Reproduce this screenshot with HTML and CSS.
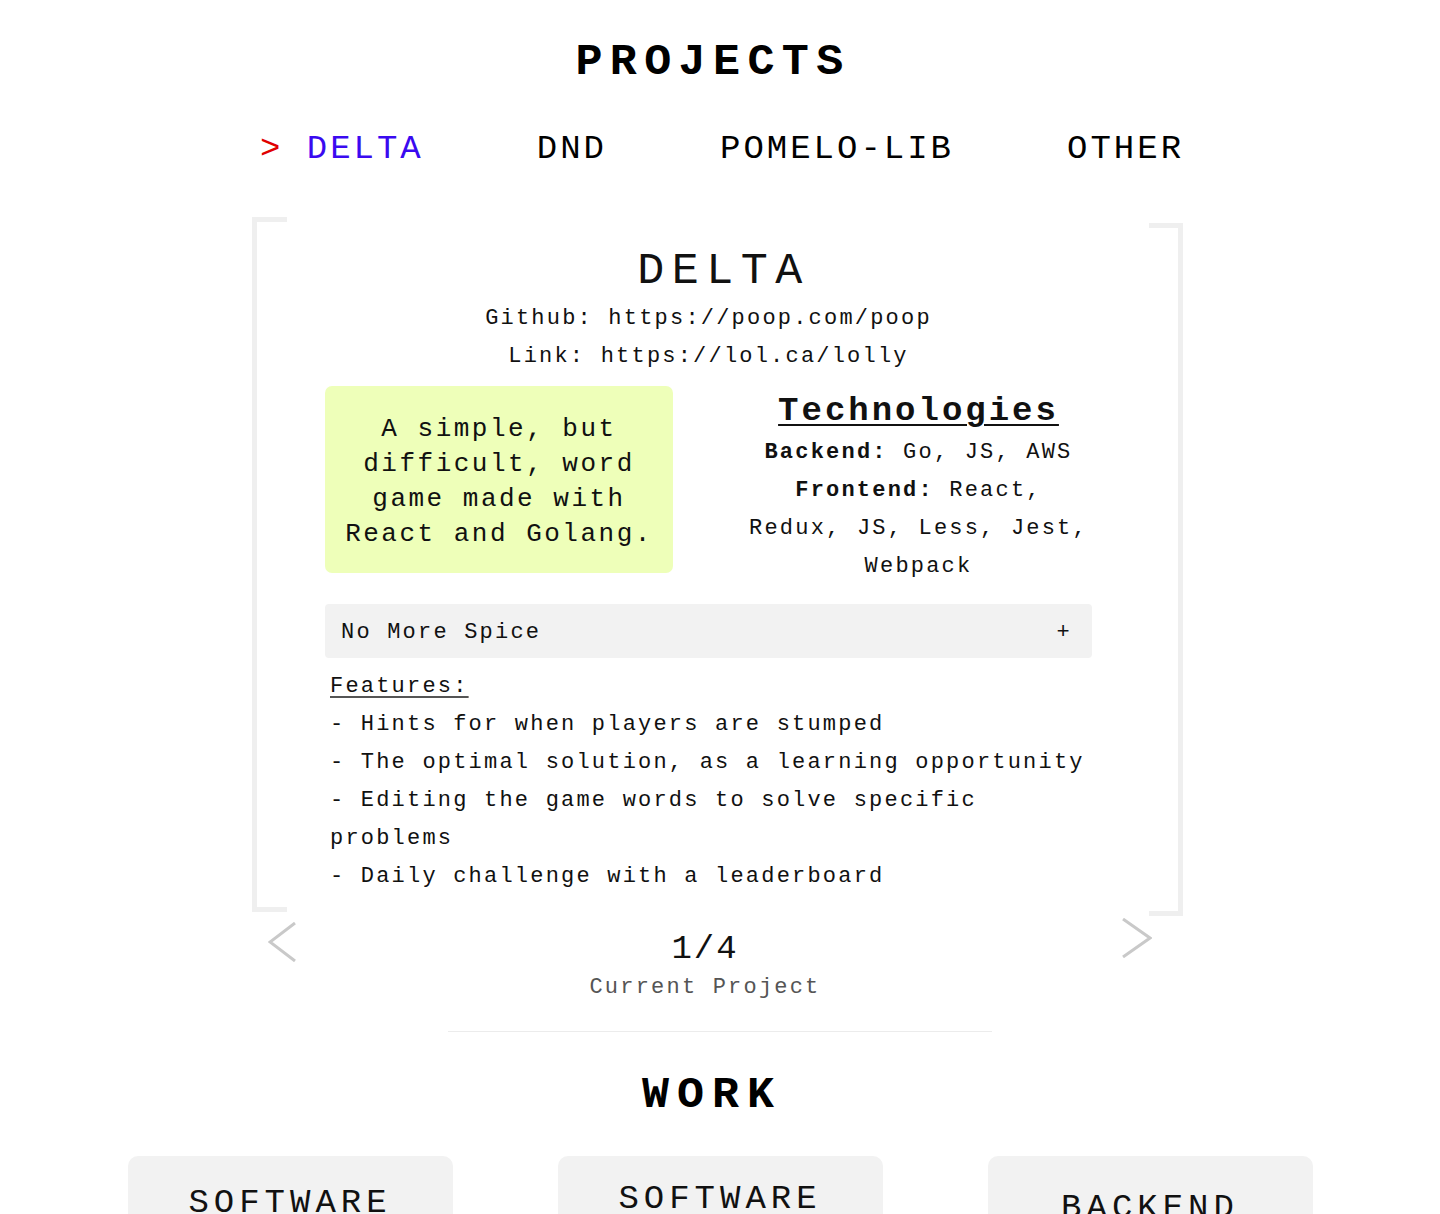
FILE: index.html
```html
<!DOCTYPE html>
<html lang="en">
<head>
<meta charset="utf-8">
<title>Projects</title>
<link rel="stylesheet" href="styles.css">
</head>
<body>
<main class="page">
  <h1 class="section-title">PROJECTS</h1>
  <nav class="tabs">
    <span class="tab tab-active"><span class="tab-caret">&gt;</span> DELTA</span>
    <span class="tab">DND</span>
    <span class="tab">POMELO-LIB</span>
    <span class="tab">OTHER</span>
  </nav>

  <section class="card">
    <h2 class="project-title">DELTA</h2>
    <p class="project-link">Github: https://poop.com/poop</p>
    <p class="project-link">Link: https://lol.ca/lolly</p>
    <div class="project-row">
      <div class="summary">A simple, but difficult, word game made with React and Golang.</div>
      <div class="tech">
        <h3 class="tech-title">Technologies</h3>
        <p class="tech-line"><b>Backend:</b> Go, JS, AWS</p>
        <p class="tech-line"><b>Frontend:</b> React, Redux, JS, Less, Jest, Webpack</p>
      </div>
    </div>
    <div class="accordion">
      <span class="accordion-label">No More Spice</span>
      <span class="accordion-icon">+</span>
    </div>
    <div class="features">
      <div class="features-title">Features:</div>
      <div class="feature">- Hints for when players are stumped</div>
      <div class="feature">- The optimal solution, as a learning opportunity</div>
      <div class="feature">- Editing the game words to solve specific problems</div>
      <div class="feature">- Daily challenge with a leaderboard</div>
    </div>
  </section>

  <div class="controls">
    <svg class="arrow arrow-prev" width="28" height="40" viewBox="0 0 28 40"><polyline points="27,1 2,20 27,39" fill="none" stroke="#c9c9c9" stroke-width="3"/></svg>
    <div class="counter">
      <div class="counter-value">1/4</div>
      <div class="counter-label">Current Project</div>
    </div>
    <svg class="arrow arrow-next" width="30" height="40" viewBox="0 0 30 40"><polyline points="1,1 28,20 1,39" fill="none" stroke="#c9c9c9" stroke-width="3"/></svg>
  </div>

  <hr class="divider">

  <h1 class="section-title section-title-work">WORK</h1>
  <div class="work-grid">
    <div class="work-card"><div class="work-title work-title-a">SOFTWARE</div></div>
    <div class="work-card"><div class="work-title work-title-b">SOFTWARE</div></div>
    <div class="work-card"><div class="work-title work-title-c">BACKEND</div></div>
  </div>
</main>
</body>
</html>
```

FILE: styles.css
```css
*, *::before, *::after { box-sizing: border-box; }

html, body {
  margin: 0;
  padding: 0;
  background: #ffffff;
}

body {
  font-family: "Liberation Mono", "DejaVu Sans Mono", monospace;
  color: #111111;
  overflow: hidden;
}

.page {
  width: 1440px;
  padding-top: 37px;
}

.section-title {
  margin: 0;
  font-size: 45px;
  line-height: 52px;
  font-weight: 700;
  letter-spacing: 7.4px;
  text-align: center;
  padding-right: 14px;
  color: #000;
}

.tabs {
  display: flex;
  justify-content: center;
  gap: 113px;
  margin-top: 40px;
  font-size: 34px;
  line-height: 40px;
  letter-spacing: 3px;
  padding-left: 4px;
}

.tab { color: #000; }
.tab-active { color: #3a0af0; }
.tab-caret { color: #e00000; }

.card {
  position: relative;
  width: 931px;
  margin: 48px 0 0 252px;
  padding: 27px 91px 16px 73px;
}

.card::before,
.card::after {
  content: "";
  position: absolute;
  border: 5px solid #efefef;
}

.card::before {
  left: 0;
  top: 0;
  width: 35px;
  height: 695px;
  border-right: none;
}

.card::after {
  right: 0;
  top: 6px;
  width: 34px;
  height: 693px;
  border-left: none;
}

.project-title {
  margin: 0;
  font-size: 45px;
  line-height: 56px;
  font-weight: 400;
  letter-spacing: 7.5px;
  text-align: center;
  padding-left: 30px;
}

.project-link {
  margin: 0;
  font-size: 22px;
  line-height: 38px;
  letter-spacing: 2.2px;
  text-align: center;
}

.project-row {
  display: grid;
  grid-template-columns: 348px 347px;
  column-gap: 72px;
  margin-top: 10px;
  align-items: start;
}

.summary {
  background: #eeffb9;
  border-radius: 7px;
  padding: 26px 18px 21px;
  font-size: 26px;
  line-height: 35px;
  letter-spacing: 2.5px;
  text-align: center;
}

.tech {
  text-align: center;
  padding-top: 2px;
}

.tech-title {
  margin: 0;
  font-size: 34px;
  line-height: 46px;
  font-weight: 700;
  letter-spacing: 3px;
  text-decoration: underline;
  text-decoration-thickness: 2px;
  text-underline-offset: 4px;
}

.tech-line {
  margin: 0;
  font-size: 22px;
  line-height: 38px;
  letter-spacing: 2.2px;
}

.accordion {
  display: flex;
  justify-content: space-between;
  align-items: center;
  height: 54px;
  margin-top: 18px;
  padding: 2px 20px 0 16px;
  background: #f2f2f2;
  border-radius: 4px;
  font-size: 22px;
  letter-spacing: 2.2px;
}

.features {
  margin-top: 10px;
  padding-left: 5px;
  font-size: 22px;
  line-height: 38px;
  letter-spacing: 2.2px;
}

.features-title {
  text-decoration: underline;
  text-decoration-color: #555;
  text-underline-offset: 4px;
}

.controls {
  display: flex;
  justify-content: space-between;
  align-items: flex-start;
  width: 931px;
  margin-left: 252px;
  padding: 0 31px 0 16px;
}

.arrow { display: block; }
.arrow-prev { margin-top: 10px; }
.arrow-next { margin-top: 6px; }

.counter {
  padding-top: 17px;
  padding-right: 8px;
  text-align: center;
}

.counter-value {
  font-size: 34px;
  line-height: 40px;
  letter-spacing: 2px;
  color: #111;
}

.counter-label {
  margin-top: 3px;
  font-size: 22px;
  line-height: 32px;
  letter-spacing: 2.2px;
  color: #555;
}

.divider {
  width: 544px;
  margin: 27px auto 0;
  border: none;
  border-top: 1px solid #ececec;
  height: 0;
}

.section-title-work {
  margin-top: 38px;
  letter-spacing: 8px;
  padding-right: 16px;
}

.work-grid {
  display: grid;
  grid-template-columns: repeat(3, 325px);
  column-gap: 105px;
  justify-content: center;
  margin-top: 34px;
}

.work-card {
  background: #f2f2f2;
  border-radius: 10px;
  min-height: 220px;
  text-align: center;
}

.work-title {
  font-size: 34px;
  line-height: 40px;
  letter-spacing: 5px;
  color: #111;
}

.work-title-a { padding-top: 27px; }
.work-title-b { padding-top: 23px; }
.work-title-c { padding-top: 32px; }
```
